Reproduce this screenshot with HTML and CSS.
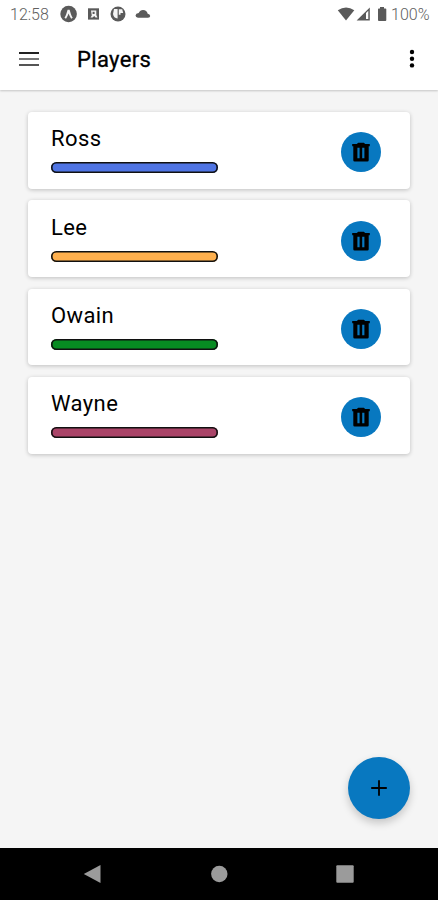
FILE: index.html
```html
<!DOCTYPE html>
<html lang="en">
<head>
<meta charset="utf-8">
<meta name="viewport" content="width=device-width, initial-scale=1">
<title>Players</title>
<link rel="stylesheet" href="styles.css">
</head>
<body>
<svg class="defs" aria-hidden="true">
  <symbol id="trash" viewBox="0 0 20 20">
    <path fill-rule="evenodd" d="M1.200 2h4.600L7.200.7h5.600L14.200 2h4.600v2.200h-1.100v14q0 1.300-1.300 1.300H3.600q-1.300 0-1.300-1.300v-14H1.200zM6.400 5.700v10.600h2.200V5.700zM11.200 5.700v10.600h2.200V5.700z"/>
  </symbol>
</svg>
<div class="screen">
  <header class="top">
    <div class="status">
      <span class="clock">12:58</span>
      <svg class="notices" width="92" height="28" viewBox="60 0 92 28">
        <circle cx="68.600" cy="14" r="8.300"/>
        <path class="cut" d="M64.500 17.800C66 15.500 66.800 12.500 67.600 9.800h2c.8 2.700 1.600 5.700 3.100 8l-1.500 1c-1.100-1.400-1.800-3.400-2.600-5.200-.8 1.800-1.500 3.800-2.600 5.200z"/>
        <path d="M88 8.300h11v11.300H88z"/>
        <path class="cut" d="M91 10.500h5.300v4.500l1.200 2.400h-2l-1.200-1.500-1.800 1.500h-2l1.300-2z"/>
        <path d="M92.600 11.800h2v2.200h-2z"/>
        <circle cx="118" cy="14" r="7.500"/>
        <path class="cut" d="M114 9h3.600v9.500q-4-.5-4.600-4.500zM118.800 9.300h3.400l1 3.700h-2.700v1.800h-1.700z"/>
        <path d="M138 17.800h10q2.200-.2 2.200-1.800-.2-1.800-2.500-2.200-.8-3.600-4.700-3.800-3 0-4.300 3-3 .4-3.200 2.600.2 2 2.500 2.200z"/>
      </svg>
      <svg class="signals" width="52" height="28" viewBox="337 0 52 28">
        <path d="M337.800 10.200q8.300-5.500 16.500 0L346 20.500z"/>
        <path d="M356.600 20.500 369.800 7.500v13zM366 13v6h2.300v-8.200z" fill-rule="evenodd"/>
        <path d="M380 8.500V7h4v1.500h1.500q.8 0 .8.800v10.700q0 .9-.9.900h-6.500q-.9 0-.9-.9V9.300q0-.8.800-.8z"/>
      </svg>
      <span class="charge">100%</span>
    </div>
    <div class="appbar">
      <svg class="menu" width="20" height="16" viewBox="0 0 20 16">
        <path class="dark" d="M0 1h20v2H0z"/><path d="M0 7h20v2H0z"/><path class="mid" d="M0 13h20v2H0z"/>
      </svg>
      <h1 class="title">Players</h1>
      <svg class="more" width="6" height="20" viewBox="0 0 6 20">
        <circle cx="3" cy="3" r="2.200"/><circle cx="3" cy="9.700" r="2.200"/><circle cx="3" cy="16.400" r="2.200"/>
      </svg>
    </div>
  </header>
  <main class="players">
    <div class="card">
      <div class="info"><span class="name">Ross</span><span class="bar blue"></span></div>
      <button class="delete" aria-label="Delete"><svg width="20" height="20"><use href="#trash"/></svg></button>
    </div>
    <div class="card">
      <div class="info"><span class="name">Lee</span><span class="bar orange"></span></div>
      <button class="delete" aria-label="Delete"><svg width="20" height="20"><use href="#trash"/></svg></button>
    </div>
    <div class="card">
      <div class="info"><span class="name">Owain</span><span class="bar green"></span></div>
      <button class="delete" aria-label="Delete"><svg width="20" height="20"><use href="#trash"/></svg></button>
    </div>
    <div class="card">
      <div class="info"><span class="name">Wayne</span><span class="bar plum"></span></div>
      <button class="delete" aria-label="Delete"><svg width="20" height="20"><use href="#trash"/></svg></button>
    </div>
  </main>
  <button class="add" aria-label="Add player">
    <svg width="16" height="16" viewBox="0 0 16 16"><path d="M7.100.2h1.800v6.900h6.900v1.800H8.900v6.900H7.100V8.900H.2V7.100h6.900z"/></svg>
  </button>
  <nav class="navbar">
    <svg width="18" height="20" viewBox="0 0 18 20"><path d="M17.500 1v18L.8 10z"/></svg>
    <svg width="18" height="18" viewBox="0 0 18 18"><circle cx="9.300" cy="9" r="8.200"/></svg>
    <svg width="18" height="18" viewBox="0 0 18 18"><rect x=".3" y=".3" width="17.400" height="17.400" rx="1"/></svg>
  </nav>
</div>
</body>
</html>
```

FILE: styles.css
```css
* {
  box-sizing: border-box;
}

body {
  margin: 0;
  font-family: Roboto, "Liberation Sans", sans-serif;
}

button {
  padding: 0;
  border: 0;
}

.defs {
  position: absolute;
  width: 0;
  height: 0;
}

.screen {
  position: relative;
  display: flex;
  flex-direction: column;
  height: 900px;
  background: #f5f5f5;
  overflow: hidden;
}

.top {
  height: 90px;
  background: #fff;
  box-shadow: 0 1px 2px rgba(0, 0, 0, 0.2);
}

.status {
  display: flex;
  align-items: center;
  height: 28px;
  padding: 0 7px 0 10px;
  font-size: 16px;
  font-weight: 300;
  color: #606060;
  fill: #5a5a5a;
}

.clock {
  width: 50px;
}

.notices .cut {
  fill: #f4f4f4;
}

.signals {
  margin-left: auto;
}

.charge {
  width: 40px;
  margin-left: 2px;
}

.appbar {
  display: flex;
  align-items: center;
  height: 62px;
  padding: 0 23px 0 19px;
}

.menu {
  margin-top: -1px;
  fill: #777;
}

.menu .dark {
  fill: #222;
}

.menu .mid {
  fill: #555;
}

.title {
  margin: 2px 0 0 38px;
  font-size: 22px;
  line-height: 28px;
  font-weight: 400;
  letter-spacing: 0.350px;
  -webkit-text-stroke: 0.300px #000;
}

.more {
  margin: 0 0 0 auto;
}

.players {
  display: flex;
  flex: 1;
  flex-direction: column;
  gap: 11.600px;
  padding: 22px 28px 0;
}

.card {
  display: flex;
  align-items: center;
  justify-content: space-between;
  height: 76.700px;
  padding: 0 29px 0 23px;
  border-radius: 4px;
  background: #fff;
  box-shadow: 0 1px 4px rgba(0, 0, 0, 0.22);
}

.info {
  display: flex;
  flex-direction: column;
  gap: 10px;
  margin-top: -1px;
}

.name {
  font-size: 22px;
  line-height: 26px;
  letter-spacing: 0.400px;
}

.bar {
  width: 166.500px;
  height: 11px;
  border-radius: 5.500px;
  box-shadow: inset 0 0 0 1.600px #101010;
}

.blue {
  background: #4f74e3;
}

.orange {
  background: #ffb04d;
}

.green {
  background: #078c22;
}

.plum {
  background: #aa4468;
}

.delete {
  display: grid;
  place-items: center;
  width: 40px;
  height: 40px;
  margin-top: 4px;
  border-radius: 50%;
  background: #0878c0;
}

.add {
  position: absolute;
  top: 757px;
  left: 348px;
  display: grid;
  place-items: center;
  width: 62px;
  height: 62px;
  border-radius: 50%;
  background: #0878c0;
  box-shadow: 0 4px 8px rgba(0, 0, 0, 0.2);
}

.navbar {
  display: flex;
  align-items: center;
  justify-content: space-between;
  height: 52.500px;
  padding: 0 84px 0 83px;
  background: #000;
  fill: #9b9b9b;
}
```
